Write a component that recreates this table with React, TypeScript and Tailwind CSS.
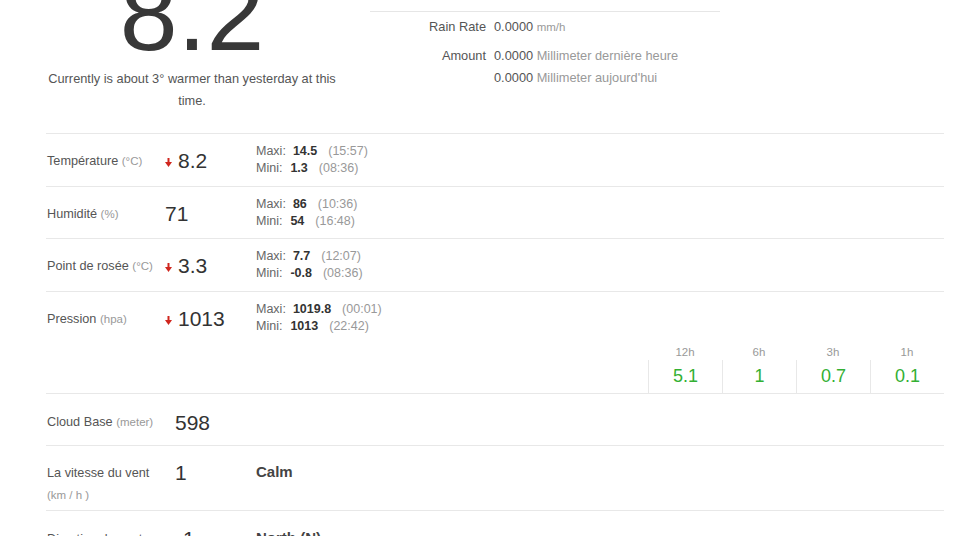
import React from 'react';

function DownArrow() {
  return (
    <svg width="7" height="9" viewBox="0 0 7 9" className="shrink-0 mr-[6px] mt-[2px]">
      <rect x="2.5" y="0" width="2" height="5" fill="#d0261e" />
      <polygon points="0,4 7,4 3.5,9" fill="#d0261e" />
    </svg>
  );
}

type Stat = { label: string; unit: string; value: string; down: boolean; max: string; maxAt: string; min: string; minAt: string };

const stats: Stat[] = [
  { label: 'Température', unit: '(°C)', value: '8.2', down: true, max: '14.5', maxAt: '(15:57)', min: '1.3', minAt: '(08:36)' },
  { label: 'Humidité', unit: '(%)', value: '71', down: false, max: '86', maxAt: '(10:36)', min: '54', minAt: '(16:48)' },
  { label: 'Point de rosée', unit: '(°C)', value: '3.3', down: true, max: '7.7', maxAt: '(12:07)', min: '-0.8', minAt: '(08:36)' },
];

const trend = [
  { h: '12h', v: '5.1' },
  { h: '6h', v: '1' },
  { h: '3h', v: '0.7' },
  { h: '1h', v: '0.1' },
];

function StatTop({ s, tight }: { s: Stat; tight?: boolean }) {
  return (
    <div className={tight ? 'flex items-center pt-[9px] pb-[8px]' : 'flex items-center py-[9px]'}>
      <div className="w-[119px] pl-px pt-[4px] text-[12.7px] text-[#555]">
        {s.label} <span className="text-[11.5px] text-[#999]">{s.unit}</span>
      </div>
      <div className="w-[91px] pt-[2px] flex items-center text-[21px] leading-[26px] text-[#333]">
        {s.down && <DownArrow />}
        <span>{s.value}</span>
      </div>
      <div className="text-[12.5px] leading-[17px] text-[#666]">
        <div>
          Maxi:<b className="ml-[7px] text-[#333]">{s.max}</b>
          <span className="ml-[11px] text-[#999]">{s.maxAt}</span>
        </div>
        <div>
          Mini:<b className="ml-[8px] text-[#333]">{s.min}</b>
          <span className="ml-[11px] text-[#999]">{s.minAt}</span>
        </div>
      </div>
    </div>
  );
}

export default function App() {
  return (
    <div className="bg-white min-h-screen h-[536px] overflow-hidden font-['Liberation_Sans',Arial,sans-serif] text-[#555]">
      <div className="pl-[46px] pr-[9px]">
        {/* top: current temp + rain */}
        <div className="flex gap-[32px]">
          <div className="w-[292px] text-center">
            <div className="-mt-[38px] text-[104px] leading-none text-[#383838]">8.2</div>
            <p className="mt-[2px] text-[12.8px] leading-[22px] text-[#555]">
              Currently is about 3° warmer than yesterday at this time.
            </p>
          </div>
          <div className="w-[350px] mt-[11px] border-t border-[#e6e6e6] pt-[4px] text-[12.8px] leading-[22px]">
            <div className="flex mb-[7px]">
              <div className="w-[116px] text-right text-[#555]">Rain Rate</div>
              <div className="pl-[8px] text-[#555]">
                0.0000 <span className="text-[11.5px] text-[#999]">mm/h</span>
              </div>
            </div>
            <div className="flex">
              <div className="w-[116px] text-right text-[#555]">Amount</div>
              <div className="pl-[8px] text-[#555]">
                <div>
                  0.0000 <span className="text-[#999]">Millimeter dernière heure</span>
                </div>
                <div>
                  0.0000 <span className="text-[#999]">Millimeter aujourd'hui</span>
                </div>
              </div>
            </div>
          </div>
        </div>

        {/* data rows */}
        <div className="mt-[21px]">
          {stats.map((s, i) => (
            <div key={s.label} className="border-t border-[#e8e8e8]">
              <StatTop s={s} tight={i === 1} />
            </div>
          ))}

          <div className="border-t border-[#e8e8e8]">
            <StatTop
              s={{ label: 'Pression', unit: '(hpa)', value: '1013', down: true, max: '1019.8', maxAt: '(00:01)', min: '1013', minAt: '(22:42)' }}
            />
            <div className="flex justify-end">
              <div className="grid grid-cols-4 w-[296px]">
                {trend.map((t) => (
                  <div key={t.h} className="text-center">
                    <div className="text-[11.5px] leading-[16px] text-[#999]">{t.h}</div>
                    <div className="border-l border-[#e8e8e8] h-[33px] flex items-center justify-center text-[18px] text-[#33b033]">
                      {t.v}
                    </div>
                  </div>
                ))}
              </div>
            </div>
          </div>

          <div className="border-t border-[#e8e8e8] flex items-center pt-[17px] pb-[11px]">
            <div className="w-[129px] pl-px text-[12.7px] leading-[23px] text-[#555]">
              Cloud Base <span className="text-[11.5px] text-[#999]">(meter)</span>
            </div>
            <div className="text-[21px] leading-[23px] text-[#333]">598</div>
          </div>

          <div className="border-t border-[#e8e8e8] flex items-start pt-[16px] pb-[4px]">
            <div className="w-[129px] pl-px text-[12.7px] leading-[22px] text-[#555]">
              La vitesse du vent
              <div className="text-[11.5px] text-[#999]">(km / h )</div>
            </div>
            <div className="w-[81px] text-[21px] leading-[22px] text-[#333]">1</div>
            <div className="text-[15px] leading-[20px] font-bold text-[#444]">Calm</div>
          </div>

          <div className="border-t border-[#e8e8e8] flex items-start pt-[17px]">
            <div className="w-[129px] pl-px text-[12.7px] leading-[22px] text-[#555]">Direction du vent</div>
            <div className="w-[81px] flex items-center text-[21px] leading-[22px] text-[#333]">
              <span className="inline-block w-[5px] h-[2px] bg-[#555] mr-[3px] mt-[4px]"></span>1
            </div>
            <div className="text-[15px] leading-[20px] font-bold text-[#444]">North (N)</div>
          </div>
        </div>
      </div>
    </div>
  );
}
